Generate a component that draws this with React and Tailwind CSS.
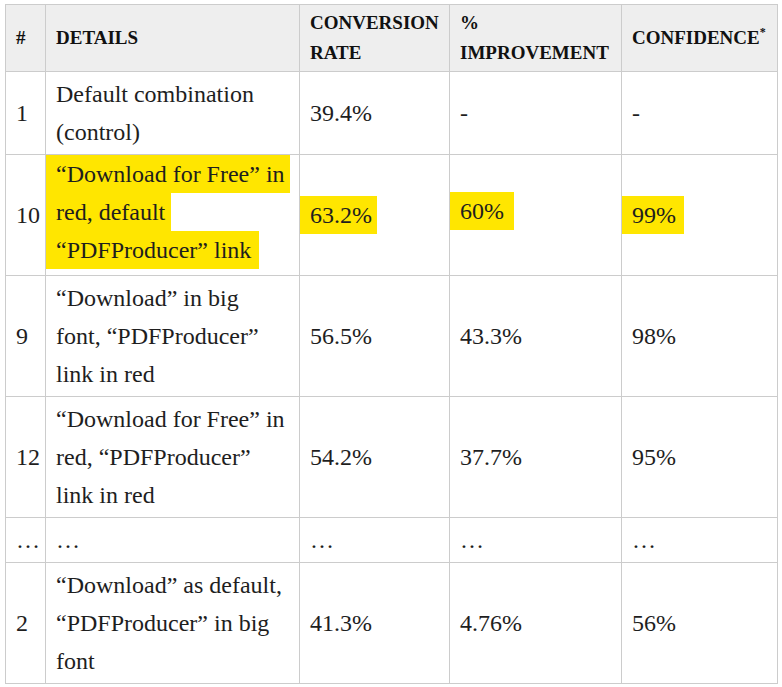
import React from "react";

const serif = { fontFamily: '"Liberation Serif", "DejaVu Serif", serif' };

function Hl({ children, className = "" }) {
  return (
    <span className={"inline-block bg-[#ffe600] -ml-[10px] pl-[10px] leading-[38px] " + className}>
      {children}
    </span>
  );
}

function LineHl({ children, className = "" }) {
  return (
    <span className={"block w-fit h-[38px] bg-[#ffe600] -ml-[11px] pl-[11px] " + className}>{children}</span>
  );
}

const th = "border border-[#cccccc] px-[10px] py-[3px] text-left align-middle font-bold text-[19px] leading-[30px] text-[#111111]";
const td = "border border-[#cccccc] px-[10px] py-[3px] align-middle text-[24px] leading-[38px] text-[#1e1e1e]";

export default function App() {
  const rows = [
    { n: "1", d: <>Default combination<br />(control)</>, c: "39.4%", i: "-", f: "-" },
    {
      n: "10",
      dc: "!pt-0 !pb-[6px]",
      d: (
        <>
          <LineHl className="pr-[5px]">“Download for Free” in</LineHl>
          <LineHl className="pr-[6px]">red, default</LineHl>
          <LineHl className="pr-[8px]">“PDFProducer” link</LineHl>
        </>
      ),
      c: <Hl className="pr-[5px]">63.2%</Hl>,
      i: <Hl className="pr-[10px] relative -top-[4px]">60%</Hl>,
      f: <Hl className="pr-[8px]">99%</Hl>,
    },
    { n: "9", d: <>“Download” in big<br />font, “PDFProducer”<br />link in red</>, c: "56.5%", i: "43.3%", f: "98%" },
    { n: "12", d: <>“Download for Free” in<br />red, “PDFProducer”<br />link in red</>, c: "54.2%", i: "37.7%", f: "95%" },
    { n: "…", d: "…", c: "…", i: "…", f: "…" },
    { n: "2", d: <>“Download” as default,<br />“PDFProducer” in big<br />font</>, c: "41.3%", i: "4.76%", f: "56%" },
  ];

  return (
    <div className="min-h-[687px] w-[782px] bg-white pl-[5px] pt-[4px]" style={serif}>
      <table className="w-[773px] table-fixed border-collapse">
        <colgroup>
          <col className="w-[40px]" />
          <col className="w-[254px]" />
          <col className="w-[150px]" />
          <col className="w-[172px]" />
          <col className="w-[156px]" />
        </colgroup>
        <thead>
          <tr className="bg-[#eeeeee]">
            <th className={th}>#</th>
            <th className={th}>DETAILS</th>
            <th className={th}>CONVERSION RATE</th>
            <th className={th}>% IMPROVEMENT</th>
            <th className={th + " whitespace-nowrap"}>
              CONFIDENCE<sup className="text-[12px] -top-[8px]">*</sup>
            </th>
          </tr>
        </thead>
        <tbody>
          {rows.map((r, idx) => (
            <tr key={idx}>
              <td className={td}>{r.n}</td>
              <td className={td + " whitespace-nowrap " + (r.dc || "")}>{r.d}</td>
              <td className={td}>{r.c}</td>
              <td className={td}>{r.i}</td>
              <td className={td}>{r.f}</td>
            </tr>
          ))}
        </tbody>
      </table>
    </div>
  );
}
